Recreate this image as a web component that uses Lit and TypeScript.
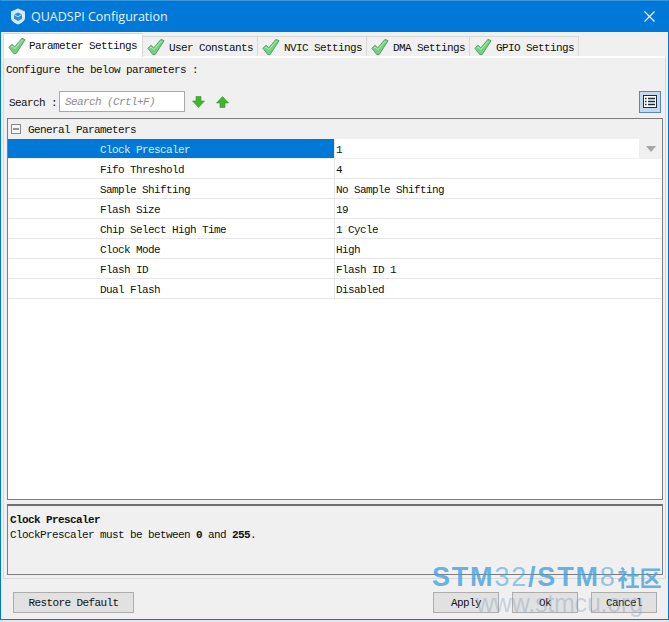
import { LitElement, css, html, svg } from 'lit';
import { customElement, state } from 'lit/decorators.js';

const check = svg`<svg class="check" width="18" height="18" viewBox="0 0 20 20">
  <path d="M1 11.5 L4.5 8 L7.5 11 L15.5 1.5 L19 3 L9 18.5 L6.5 18.5 Z" fill="#74d183" stroke="#55a463" stroke-width="1.1" stroke-linejoin="round"/>
  <path d="M3.2 11.5 L4.7 10 L7.6 12.9 L15.8 3.4" fill="none" stroke="#bdf0c3" stroke-width="1"/>
</svg>`;

const tabs = ['Parameter Settings', 'User Constants', 'NVIC Settings', 'DMA Settings', 'GPIO Settings'];

const params = [
  ['Clock Prescaler', '1'],
  ['Fifo Threshold', '4'],
  ['Sample Shifting', 'No Sample Shifting'],
  ['Flash Size', '19'],
  ['Chip Select High Time', '1 Cycle'],
  ['Clock Mode', 'High'],
  ['Flash ID', 'Flash ID 1'],
  ['Dual Flash', 'Disabled'],
];

@customElement('app-root')
class AppRoot extends LitElement {
  static styles = css`
    :host {
      display: block;
      width: 669px;
      height: 622px;
      overflow: hidden;
      position: relative;
      background: #dfe6ec;
      font: 11px 'Liberation Mono', monospace;
      letter-spacing: -0.6px;
      color: #111;
    }

    .window {
      height: 620px;
      box-sizing: border-box;
      border: 1px solid #0078d7;
      border-top-color: #3a96dd;
      background: #f0f0f0;
      display: flex;
      flex-direction: column;
    }

    .titlebar {
      height: 31px;
      flex: none;
      box-sizing: border-box;
      background: #0078d7;
      display: flex;
      align-items: center;
      padding: 0 13px 0 9px;
      gap: 5px;
      color: #e8f3fc;
      font: 12.5px 'Open Sans', 'Liberation Sans', sans-serif;
      letter-spacing: 0;
    }
    .titlebar .name {
      flex: 1;
    }

    .tabbar {
      height: 24px;
      flex: none;
      display: flex;
      align-items: flex-end;
      padding-left: 2px;
    }
    .tab {
      height: 20px;
      box-sizing: border-box;
      display: flex;
      align-items: center;
      gap: 4px;
      padding: 0 4px 0 4px;
      background: #f0f0f0;
      border: 1px solid #d9d9d9;
      border-bottom: none;
      border-left: none;
      white-space: nowrap;
    }
    .tab span {
      padding-top: 3px;
    }
    .tab.active {
      height: 24px;
      background: #fff;
      border: 1px solid #d9d9d9;
      border-bottom: none;
      gap: 3px;
      padding: 0 5px 0 4px;
      position: relative;
      z-index: 1;
      margin-bottom: -1px;
    }
    .tab.active span {
      padding-top: 0;
    }

    .pane {
      flex: 1;
      margin: 0 2px 0 2px;
      border: 1px solid #d9d9d9;
      border-top: 2px solid #fff;
      display: flex;
      flex-direction: column;
      padding: 5px 2px 3px 3px;
      min-height: 0;
    }
    .intro {
      height: 14px;
      line-height: 14px;
      margin-left: -1px;
    }

    .search {
      display: flex;
      align-items: center;
      height: 23px;
      margin: 13px 0 5px 0;
      padding-right: 2px;
    }
    .search .label {
      margin-left: 2px;
      width: 50px;
      padding-top: 2px;
    }
    .search .input {
      width: 126px;
      height: 21px;
      box-sizing: border-box;
      border: 1px solid #a9a9a9;
      background: #fff;
      color: #8d8d8d;
      font-style: italic;
      line-height: 21px;
      padding-left: 5px;
    }
    .search .down {
      margin-left: 7px;
    }
    .search .up {
      margin-left: 11px;
    }
    .view-toggle {
      margin-left: auto;
      width: 22px;
      height: 22px;
      box-sizing: border-box;
      border: 1px solid #5d86b6;
      background: #c4d9ef;
      display: flex;
      align-items: center;
      justify-content: center;
    }

    .grid {
      flex: 1;
      min-height: 0;
      border: 1px solid #7d7d7d;
      background: #fff;
    }
    .group {
      height: 20px;
      background: #f0f0f0;
      display: flex;
      align-items: center;
      gap: 7px;
      padding-left: 3px;
    }
    .group span {
      padding-top: 1px;
    }
    .row {
      height: 20px;
      box-sizing: border-box;
      display: grid;
      grid-template-columns: 327px 1fr;
      grid-template-rows: 19px;
      border-bottom: 1px solid #e6e6e6;
      line-height: 19px;
    }
    .row .key {
      padding-left: 92px;
      padding-top: 2px;
      box-sizing: border-box;
      border-right: 1px solid #e6e6e6;
    }
    .row .value {
      padding-left: 1px;
      display: flex;
      justify-content: space-between;
    }
    .row .value > span:first-child {
      padding-top: 2px;
    }
    .row.selected {
      border-bottom-color: #f0f0f0;
    }
    .row.selected .key {
      background: #0078d7;
      color: #d8ecfb;
    }
    .row .dropdown {
      width: 23px;
      background: #f0f0f0;
      display: flex;
      align-items: center;
      justify-content: center;
    }

    .help {
      height: 71px;
      flex: none;
      box-sizing: border-box;
      margin-top: 4px;
      border: 1px solid #7d7d7d;
      border-top: 2px solid #6f6f6f;
      padding: 7px 2px;
      line-height: 15px;
    }
    .help .title {
      font-weight: 700;
    }
    .help b {
      font-weight: 700;
    }

    .footer {
      height: 40px;
      flex: none;
      box-sizing: border-box;
      display: flex;
      align-items: flex-start;
      padding: 13px 11px 0 12px;
      gap: 13px;
    }
    .btn {
      height: 21px;
      width: 66px;
      box-sizing: border-box;
      border: 1px solid #adadad;
      background: #e1e1e1;
      text-align: center;
      line-height: 21px;
    }
    .btn.wide {
      width: 121px;
      margin-right: auto;
    }

    .watermark {
      position: absolute;
      left: 432px;
      top: 560px;
      width: 232px;
      pointer-events: none;
      font-family: 'Liberation Sans', sans-serif;
      letter-spacing: 0;
      color: rgba(66, 160, 222, 0.8);
    }
    .watermark .brand {
      font-size: 27px;
      line-height: 30px;
      font-weight: 700;
      letter-spacing: 1.8px;
      white-space: nowrap;
      display: flex;
      align-items: baseline;
    }
    .watermark .brand i {
      font-style: normal;
      font-weight: 400;
      color: rgba(66, 160, 222, 0.55);
    }
    .watermark .brand em {
      font: 700 22px 'Noto Sans CJK SC', sans-serif;
      letter-spacing: 0;
      margin-left: 1px;
    }
    .watermark .url {
      margin-left: 44px;
      margin-top: -2px;
      font-size: 25px;
      line-height: 26px;
      color: rgba(120, 150, 180, 0.35);
      letter-spacing: -0.2px;
      white-space: nowrap;
    }
  `;

  @state() selected = 0;

  render() {
    return html`
      <div class="window">
        <div class="titlebar">
          <svg width="16" height="17" viewBox="0 0 16 17">
            <path d="M8 .5 15 3.5V10C15 13 11 15.5 8 16.5 5 15.5 1 13 1 10V3.5Z" fill="#d7eaf8"/>
            <path d="M8 4.5 12 6.6V10.8L8 13 4 10.8V6.6Z" fill="#2f8fd6"/>
            <path d="M4 6.6 8 8.8 12 6.6" fill="none" stroke="#d7eaf8" stroke-width=".8"/>
          </svg>
          <span class="name">QUADSPI Configuration</span>
          <svg width="11" height="11" viewBox="0 0 11 11">
            <path d="M.5 .5 10.5 10.5M10.5 .5 .5 10.5" stroke="#fff" stroke-width="1.1"/>
          </svg>
        </div>
        <div class="tabbar">
          ${tabs.map(
            (t, i) => html`<div class="tab ${i === 0 ? 'active' : ''}">${check}<span>${t}</span></div>`,
          )}
        </div>
        <div class="pane">
          <div class="intro">Configure the below parameters :</div>
          <div class="search">
            <span class="label">Search :</span>
            <div class="input">Search (Crtl+F)</div>
            <svg class="down" width="13" height="12" viewBox="0 0 13 12">
              <path d="M4 .5H9V5H12.5L6.5 11.5 .5 5H4Z" fill="#42b52f" stroke="#2f9a22" stroke-width=".6"/>
            </svg>
            <svg class="up" width="13" height="12" viewBox="0 0 13 12">
              <path d="M4 11.5H9V7H12.5L6.5 .5 .5 7H4Z" fill="#42b52f" stroke="#2f9a22" stroke-width=".6"/>
            </svg>
            <div class="view-toggle">
              <svg width="14" height="13" viewBox="0 0 14 13">
                <rect x=".5" y=".5" width="13" height="12" fill="#fff" stroke="#1c2c44"/>
                <path d="M2 3.5H3.5M5 3.5H12M2 6.5H3.5M5 6.5H12M2 9.5H3.5M5 9.5H12" stroke="#1c2c44" stroke-width="1.4"/>
              </svg>
            </div>
          </div>
          <div class="grid">
            <div class="group">
              <svg width="10" height="10" viewBox="0 0 10 10">
                <rect x=".5" y=".5" width="9" height="9" fill="#f4f4f4" stroke="#8a8a8a"/>
                <path d="M2 5H8" stroke="#333"/>
              </svg>
              <span>General Parameters</span>
            </div>
            ${params.map(
              ([k, v], i) => html`<div class="row ${i === this.selected ? 'selected' : ''}">
                <div class="key">${k}</div>
                <div class="value">
                  <span>${v}</span>
                  ${i === this.selected
                    ? html`<span class="dropdown">
                        <svg width="10" height="6" viewBox="0 0 10 6"><path d="M0 0H10L5 6Z" fill="#a8a8a8"/></svg>
                      </span>`
                    : ''}
                </div>
              </div>`,
            )}
          </div>
          <div class="help">
            <div class="title">Clock Prescaler</div>
            <div>ClockPrescaler must be between <b>0</b> and <b>255</b>.</div>
          </div>
        </div>
        <div class="footer">
          <div class="btn wide">Restore Default</div>
          <div class="btn">Apply</div>
          <div class="btn">Ok</div>
          <div class="btn">Cancel</div>
        </div>
      </div>
      <div class="watermark">
        <div class="brand">STM<i>32</i>/STM<i>8</i><em>社区</em></div>
        <div class="url">www.stmcu.org</div>
      </div>
    `;
  }
}
